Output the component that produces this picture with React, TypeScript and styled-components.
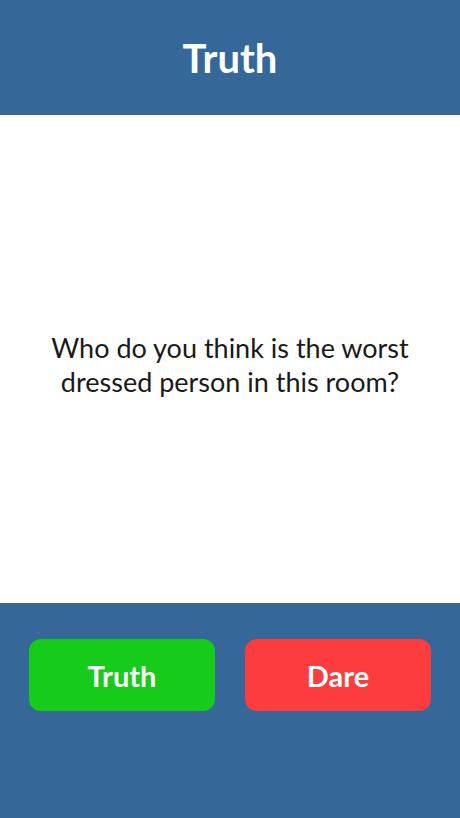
import React from 'react';
import styled, {createGlobalStyle} from 'styled-components';

const GlobalStyle = createGlobalStyle`
    html, body {
        margin: 0;
        padding: 0;
        height: 100%;
    }
    #root {
        height: 100%;
    }
    * {
        box-sizing: border-box;
    }
`

const Page = styled.div`
    display: flex;
    flex-direction: column;
    width: 460px;
    height: 818px;
    font-family: Lato, "Open Sans", sans-serif;
    background-color: #356899;
`

const Header = styled.header`
    display: flex;
    justify-content: center;
    align-items: center;
    height: 115px;
    color: #fff;
    font-size: 40px;
    font-weight: bold;
`

const Card = styled.main`
    display: flex;
    flex: 1;
    justify-content: center;
    align-items: center;
    background-color: #fff;
    padding: 12px 40px 0;
`

const Question = styled.p`
    margin: 0;
    text-align: center;
    color: #1a1a1a;
    font-size: 27px;
    line-height: 34px;
`

const Footer = styled.footer`
    display: flex;
    justify-content: space-between;
    height: 215px;
    padding: 36px 29px 0;
`

const Button = styled.button<{$color: string}>`
    width: 186px;
    height: 72px;
    border: none;
    border-radius: 12px;
    background-color: ${props => props.$color};
    color: #fff;
    font-family: inherit;
    font-size: 29px;
    font-weight: bold;
    cursor: pointer;
`

const App: React.FC = () => {
    return (
        <>
            <GlobalStyle />
            <Page>
                <Header>Truth</Header>
                <Card>
                    <Question>Who do you think is the worst dressed person in this room?</Question>
                </Card>
                <Footer>
                    <Button $color="#17cb1b">Truth</Button>
                    <Button $color="#fd3c3d">Dare</Button>
                </Footer>
            </Page>
        </>
    )
}

export default App;
